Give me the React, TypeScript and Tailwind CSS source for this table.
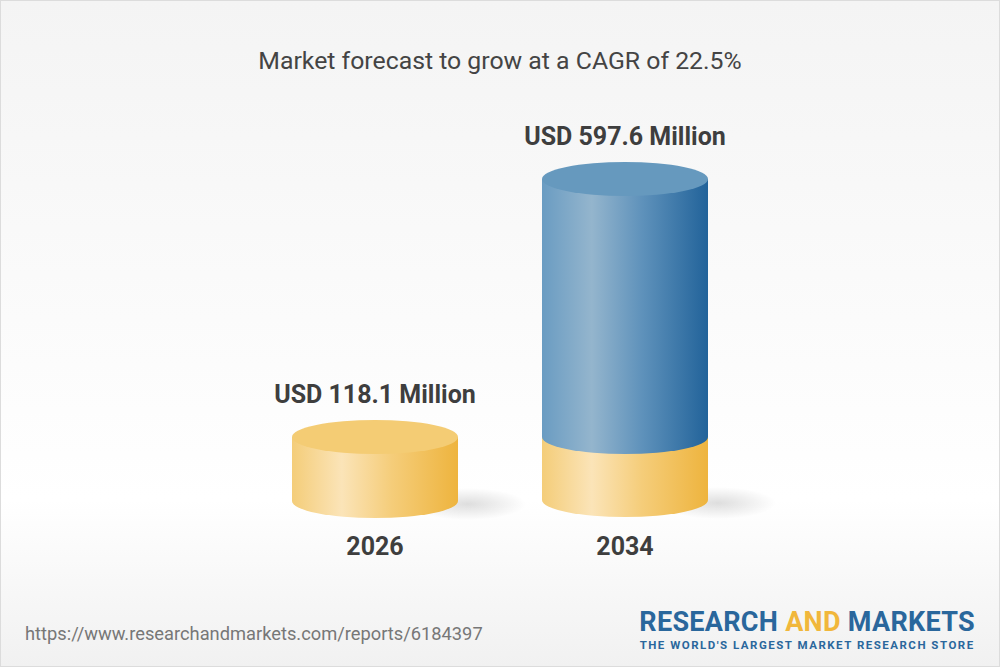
import React from 'react';

const CylinderDefs: React.FC<{ id: string }> = ({ id }) => (
  <>
    <linearGradient id={`${id}-yb`} x1="42" x2="208" y1="0" y2="0" gradientUnits="userSpaceOnUse">
      <stop offset="0" stopColor="#f4cd79" />
      <stop offset="0.3" stopColor="#fbe4b8" />
      <stop offset="0.6" stopColor="#f5cd7a" />
      <stop offset="1" stopColor="#eeb43e" />
    </linearGradient>
    <linearGradient id={`${id}-bb`} x1="42" x2="208" y1="0" y2="0" gradientUnits="userSpaceOnUse">
      <stop offset="0" stopColor="#6a9cc2" />
      <stop offset="0.3" stopColor="#94b5cd" />
      <stop offset="0.6" stopColor="#5f92bb" />
      <stop offset="1" stopColor="#22639a" />
    </linearGradient>
    <radialGradient id={`${id}-sh`}>
      <stop offset="0" stopColor="#000" stopOpacity="0.13" />
      <stop offset="1" stopColor="#000" stopOpacity="0" />
    </radialGradient>
  </>
);

// cylinder drawing, cx 125, rx 83, ry 17
const SmallCylinder: React.FC = () => (
  <svg width="250" height="100" viewBox="0 0 250 100" className="overflow-visible block">
    <defs>
      <CylinderDefs id="c1" />
    </defs>
    <ellipse cx="218" cy="85" rx="58" ry="16" fill="url(#c1-sh)" />
    <path d="M42,18 L42,82 A83,17 0 0 0 208,82 L208,18 Z" fill="url(#c1-yb)" />
    <ellipse cx="125" cy="18" rx="83" ry="17" fill="#f4cc74" />
  </svg>
);

const TallCylinder: React.FC = () => (
  <svg width="250" height="357" viewBox="0 0 250 357" className="overflow-visible block">
    <defs>
      <CylinderDefs id="c2" />
    </defs>
    <ellipse cx="218" cy="341" rx="58" ry="16" fill="url(#c2-sh)" />
    <path d="M42,275 L42,338 A83,17 0 0 0 208,338 L208,275 Z" fill="url(#c2-yb)" />
    <path d="M42,17 L42,275 A83,17 0 0 0 208,275 L208,17 Z" fill="url(#c2-bb)" />
    <ellipse cx="125" cy="17" rx="83" ry="17" fill="#6699be" />
  </svg>
);

const App: React.FC = () => {
  return (
    <div
      className="w-[1000px] h-[667px] border border-[#dcdcdc] flex flex-col bg-gradient-to-b from-[#f4f4f4] via-[#ffffff] via-75% to-[#f1f1f1] text-[#3e3e3e]"
      style={{ fontFamily: 'Roboto, "Liberation Sans", sans-serif' }}
    >
      {/* Title */}
      <h1 className="mt-[46px] text-center text-[24.8px] leading-7 text-[#444]">
        Market forecast to grow at a CAGR of 22.5%
      </h1>

      {/* Chart */}
      <div className="mt-[48px] flex justify-center items-end">
        <div className="w-[250px] flex flex-col items-center">
          <p className="text-[25px] leading-7 font-bold">USD 118.1 Million</p>
          <div className="mt-[10px]">
            <SmallCylinder />
          </div>
          <p className="mt-[14px] text-[25px] leading-7 font-bold">2026</p>
        </div>
        <div className="w-[250px] flex flex-col items-center">
          <p className="text-[25px] leading-7 font-bold">USD 597.6 Million</p>
          <div className="mt-[11px]">
            <TallCylinder />
          </div>
          <p className="mt-[14px] text-[25px] leading-7 font-bold">2034</p>
        </div>
      </div>

      {/* Footer */}
      <div className="mt-auto mb-[13px] flex justify-between items-end pl-[24px] pr-[24px]">
        <p className="text-[18.3px] leading-6 text-[#777] mb-[7px]">
          https://www.researchandmarkets.com/reports/6184397
        </p>
        <div className="flex flex-col items-center">
          <p className="text-[27px] leading-8 font-bold tracking-[0.3px] text-[#2a679c] -mb-[1px]">
            RESEARCH <span className="text-[#f1b73b]">AND</span> MARKETS
          </p>
          <p className="text-[11.5px] leading-4 font-bold tracking-[1.5px] text-[#2a679c]">
            THE WORLD'S LARGEST MARKET RESEARCH STORE
          </p>
        </div>
      </div>
    </div>
  );
};

export default App;
